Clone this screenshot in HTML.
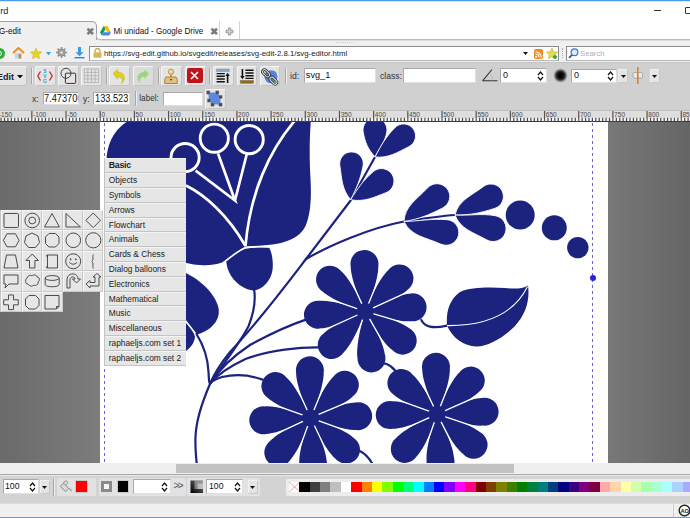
<!DOCTYPE html>
<html><head><meta charset="utf-8">
<style>
*{margin:0;padding:0;box-sizing:border-box}
html,body{width:690px;height:518px;overflow:hidden;background:#fff;font-family:"Liberation Sans",sans-serif;color:#222}
.a{position:absolute}
.t{position:absolute;white-space:nowrap;line-height:1}
.btn{position:absolute;top:66px;width:20.5px;height:20px;background:#e4e4e4;border-radius:2px;box-shadow:inset 1px 1px 0 #f4f4f4,inset -1px -1px 0 #c4c4c4}
.sep{position:absolute;top:68px;width:1px;height:16px;background:#a8a8a8;box-shadow:1px 0 0 #ececec}
.inp{position:absolute;background:#fff;border:1px solid #a9a9a9;border-right-color:#e0e0e0;border-bottom-color:#e0e0e0}
.cell{position:absolute;width:20.4px;height:20.5px;background:#e6e6e6;border:1px solid #c9c9c9;border-top-color:#f6f6f6;border-left-color:#f6f6f6}
.mi{position:absolute;left:104.9px;width:80.7px;height:14.8px;background:#e6e6e6;border-bottom:1px solid #c4c4c4;border-top:1px solid #f4f4f4;font-size:8.35px;padding-left:3.9px;line-height:12.8px;color:#222}
.sw{position:absolute;top:482px;height:10px;width:10.4px}
</style></head>
<body>
<!-- title bar -->
<div class="a" style="left:0;top:0;width:690px;height:1px;background:#4f98e2"></div><div class="a" style="left:0;top:1px;width:690px;height:1px;background:#d6e7f8"></div>
<div class="t" style="left:0.3px;top:7px;font-size:9.2px;color:#222">rd</div>
<div class="a" style="left:654px;top:10px;width:7px;height:1px;background:#333"></div>
<div class="a" style="left:684.5px;top:7px;width:9px;height:7px;border:1.4px solid #333;border-radius:1px"></div>

<!-- tab strip -->
<div class="a" style="left:-10px;top:21px;width:106.5px;height:20px;background:#f0f0f0;border:1px solid #a0a0a0;border-bottom:none;border-radius:0 5px 0 0"></div>
<div class="t" style="left:-1px;top:28px;font-size:8.15px;color:#111">G-edit</div>
<div class="t" style="left:85.5px;top:26.5px;font-size:10px;font-weight:bold;color:#7a7a7a">&#x2716;</div>

<svg class="a" style="left:100px;top:26px" width="11" height="10" viewBox="0 0 11 10"><path d="M3.7 0h3.6l3.7 6.3H7.4z" fill="#fbbc04"/><path d="M3.7 0L0 6.3l1.8 3.1 3.7-6.3z" fill="#0f9d58"/><path d="M1.8 9.4h7.4l1.8-3.1H3.6z" fill="#4285f4"/></svg>
<div class="t" style="left:113.5px;top:27.6px;font-size:8.15px;color:#111">Mi unidad - Google Drive</div>
<div class="t" style="left:209.5px;top:26.5px;font-size:10px;font-weight:bold;color:#7a7a7a">&#x2716;</div>
<div class="a" style="left:219.4px;top:21px;width:1px;height:18.5px;background:#d4d4d4"></div>
<div class="a" style="left:238.5px;top:21px;width:1px;height:18.5px;background:#d4d4d4"></div>
<svg class="a" style="left:225px;top:26.5px" width="9" height="9" viewBox="0 0 9 9"><path d="M3.3 1h2.4v2.3H8v2.4H5.7V8H3.3V5.7H1V3.3h2.3z" fill="#d0d0d0" stroke="#8a8a8a" stroke-width=".8"/></svg>

<!-- grip band -->
<div class="a" style="left:0;top:40px;width:690px;height:6px;background:#f0f0f0"></div><div class="a" style="left:100px;top:39px;width:590px;height:1px;background:#b8b8b8"></div><div class="a" style="left:100px;top:40px;width:590px;height:1px;background:#dcdcdc"></div><div class="a" style="left:96px;top:33px;width:6px;height:7px;border-left:1px solid #b8b8b8;border-bottom:1px solid #b8b8b8;border-radius:0 0 0 4px;background:transparent"></div><div class="a" style="left:336px;top:42px;width:18px;height:1px;border-top:1px dotted #cfcfcf"></div>
<div class="a" style="left:0;top:46px;width:690px;height:16px;background:#f0f0f0"></div>

<!-- nav icons -->
<div class="a" style="left:-6px;top:47.5px;width:11px;height:11px;border-radius:50%;background:#2eae3c"></div>
<div class="a" style="left:-3px;top:50.5px;width:5px;height:5px;border-radius:50%;border:1.3px solid #fff"></div>
<svg class="a" style="left:12px;top:47px" width="13" height="12" viewBox="0 0 13 12"><path d="M1 6L6.5 1 12 6" fill="none" stroke="#f28a1c" stroke-width="2"/><rect x="3" y="6" width="7" height="5.5" fill="#bcd8f0"/><rect x="6.5" y="7" width="2.5" height="4.5" fill="#c98a50"/></svg>
<svg class="a" style="left:30px;top:47.5px" width="12" height="11" viewBox="0 0 12 11"><path d="M6 0l1.7 3.7 4 .4-3 2.7.9 4L6 8.8 2.4 10.8l.9-4-3-2.7 4-.4z" fill="#e8d22c" stroke="#c8b020" stroke-width=".5"/></svg>
<svg class="a" style="left:45.5px;top:52px" width="5" height="3.5" viewBox="0 0 5 3.5"><path d="M0 0h5L2.5 3.5z" fill="#4a9be0"/></svg>
<svg class="a" style="left:56px;top:46.5px" width="11" height="11" viewBox="0 0 11 11"><g fill="#9a9a9a"><rect x="4.6" y="0" width="1.8" height="3" rx=".4" transform="rotate(0 5.5 5.5)"/><rect x="4.6" y="0" width="1.8" height="3" rx=".4" transform="rotate(45 5.5 5.5)"/><rect x="4.6" y="0" width="1.8" height="3" rx=".4" transform="rotate(90 5.5 5.5)"/><rect x="4.6" y="0" width="1.8" height="3" rx=".4" transform="rotate(135 5.5 5.5)"/><rect x="4.6" y="0" width="1.8" height="3" rx=".4" transform="rotate(180 5.5 5.5)"/><rect x="4.6" y="0" width="1.8" height="3" rx=".4" transform="rotate(225 5.5 5.5)"/><rect x="4.6" y="0" width="1.8" height="3" rx=".4" transform="rotate(270 5.5 5.5)"/><rect x="4.6" y="0" width="1.8" height="3" rx=".4" transform="rotate(315 5.5 5.5)"/></g><circle cx="5.5" cy="5.5" r="3.6" fill="#a8a8a8" stroke="#7a7a7a" stroke-width=".6"/><circle cx="5.5" cy="5.5" r="1.6" fill="#eee" stroke="#777" stroke-width=".5"/></svg>
<svg class="a" style="left:74px;top:47px" width="11" height="12" viewBox="0 0 11 12"><path d="M4 0h3v5.2h2.6L5.5 9.3 1.4 5.2H4z" fill="#3b9ae6"/><rect x="0.5" y="10" width="10" height="1.4" fill="#2a86d8"/></svg>

<!-- url bar -->
<div class="a" style="left:89.3px;top:46px;width:470px;height:14.5px;background:#fff;border:1px solid #8c8c8c;border-bottom-color:#b8b8b8"></div>
<svg class="a" style="left:92.5px;top:48px" width="9" height="10" viewBox="0 0 9 10"><path d="M2 4.5V3a2.5 2.5 0 0 1 5 0v1.5" fill="none" stroke="#c9a650" stroke-width="1.3"/><rect x="0.5" y="4.3" width="8" height="5.5" rx="0.8" fill="#d9b65a"/></svg>
<div class="t" style="left:104px;top:49.5px;font-size:7.8px;color:#1a1a1a">https://svg-edit.github.io/svgedit/releases/svg-edit-2.8.1/svg-editor.html</div>
<svg class="a" style="left:523px;top:52px" width="5" height="3" viewBox="0 0 5 3"><path d="M0 0h5L2.5 3z" fill="#111"/></svg>
<div class="a" style="left:533.5px;top:49px;width:9.5px;height:9.5px;border-radius:2px;background:#f08a24"></div>
<svg class="a" style="left:535px;top:50.5px" width="7" height="7" viewBox="0 0 7 7"><circle cx="1.2" cy="5.8" r="1" fill="#fff"/><path d="M0.5 3a3.5 3.5 0 0 1 3.5 3.5M0.5 0.8a5.7 5.7 0 0 1 5.7 5.7" fill="none" stroke="#fff" stroke-width="1.1"/></svg>
<svg class="a" style="left:546px;top:48px" width="12" height="11" viewBox="0 0 12 11"><path d="M6 0l1.7 3.7 4 .4-3 2.7.9 4L6 8.8 2.4 10.8l.9-4-3-2.7 4-.4z" fill="#e8d84a" stroke="#b8a830" stroke-width=".5"/><path d="M9 6.5l2.5 2.5L9 11.5 6.5 9z" fill="#2aa84a"/></svg>
<div class="a" style="left:562px;top:48px;width:1px;height:10px;border-left:1px dotted #aaa"></div>
<div class="a" style="left:566px;top:46px;width:130px;height:14.5px;background:#fff;border:1px solid #8c8c8c;border-bottom-color:#b8b8b8"></div>
<svg class="a" style="left:568px;top:48px" width="11" height="11" viewBox="0 0 11 11"><circle cx="6.5" cy="4.2" r="3.4" fill="#dde8fb" stroke="#3b74d8" stroke-width="1.2"/><path d="M4 6.8L1 9.8" stroke="#555" stroke-width="1.8"/></svg>
<div class="t" style="left:580px;top:49.5px;font-size:7.8px;color:#b0b0b0">Search</div>

<!-- toolbar area -->
<div class="a" style="left:0;top:62.3px;width:690px;height:48px;background:#d0d0d0;border-top:1px solid #c4c4c4"></div>

<!-- toolbar row1 -->
<div class="btn" style="left:-8px;width:34.5px"></div>
<div class="t" style="left:-3px;top:72.6px;font-size:9px;font-weight:bold;color:#222">Edit</div>
<svg class="a" style="left:17px;top:74.5px" width="6" height="3.5" viewBox="0 0 6 3.5"><path d="M0 0h6L3 3.5z" fill="#111"/></svg>
<div class="sep" style="left:31px"></div>
<div class="btn" style="left:35px"></div>
<svg class="a" style="left:35px;top:66px" width="20" height="20" viewBox="0 0 20 20"><path d="M5.5 5.5L2.8 10l2.7 4.5M14.5 5.5L17.2 10l-2.7 4.5" fill="none" stroke="#c8282a" stroke-width="1.3"/><text x="10" y="7.4" font-size="5" font-family="Liberation Sans" font-weight="bold" fill="#3aa0b4" text-anchor="middle">S</text><text x="10" y="12.2" font-size="5" font-family="Liberation Sans" font-weight="bold" fill="#3aa0b4" text-anchor="middle">V</text><text x="10" y="17" font-size="5" font-family="Liberation Sans" font-weight="bold" fill="#3aa0b4" text-anchor="middle">G</text></svg>
<div class="btn" style="left:58px"></div>
<svg class="a" style="left:58px;top:66px" width="20" height="20" viewBox="0 0 20 20"><circle cx="8" cy="7.3" r="5" fill="none" stroke="#333" stroke-width="0.9"/><rect x="7.4" y="7.2" width="10.3" height="10.2" rx="0.8" fill="none" stroke="#333" stroke-width="1"/></svg>
<div class="btn" style="left:81px"></div>
<svg class="a" style="left:81px;top:66px" width="20" height="20" viewBox="0 0 20 20"><g fill="none" stroke="#a8a8a8" stroke-width="0.7"><rect x="3.2" y="3" width="14.6" height="13.4"/><path d="M6.8 3v13.4M10.5 3v13.4M14.2 3v13.4M3.2 6.4h14.6M3.2 9.7h14.6M3.2 13h14.6"/></g></svg>
<div class="sep" style="left:106px"></div>
<div class="btn" style="left:109px"></div>
<svg class="a" style="left:109px;top:66px" width="20" height="20" viewBox="0 0 20 20"><path d="M4 7.5L8.5 3.5v2.5c4 0 7 2.3 7 6 0 2.5-1.5 4.3-3.3 5.5 1-1.5 1.3-3 .8-4.3-.6-1.7-2.5-2.5-4.5-2.5v2.5z" fill="#e0cf1c" stroke="#c4b210" stroke-width=".5"/></svg>
<div class="btn" style="left:133px;background:#dcdcdc"></div>
<svg class="a" style="left:133px;top:66px" width="20" height="20" viewBox="0 0 20 20"><path d="M16 7.5L11.5 3.5v2.5c-4 0-7 2.3-7 6 0 2.5 1.5 4.3 3.3 5.5-1-1.5-1.3-3-.8-4.3.6-1.7 2.5-2.5 4.5-2.5v2.5z" fill="#98d680"/></svg>
<div class="sep" style="left:157.5px"></div>
<div class="btn" style="left:161px"></div>
<svg class="a" style="left:161px;top:66px" width="20" height="20" viewBox="0 0 20 20"><circle cx="10" cy="5.8" r="2.6" fill="#f0dca0" stroke="#a87d28" stroke-width=".8"/><rect x="9" y="8" width="2" height="3.5" fill="#c8a050"/><path d="M5 11h10l1.3 2.5v4H3.7v-4z" fill="#e0c27a" stroke="#9c7420" stroke-width=".8"/><path d="M8.7 13.3h2.6L10 14.8z" fill="#222"/></svg>
<div class="btn" style="left:185px"></div>
<div class="a" style="left:187.4px;top:68.4px;width:15.2px;height:14.6px;background:#c0141a;border-radius:2px"></div>
<svg class="a" style="left:187.4px;top:68.4px" width="15" height="15" viewBox="0 0 15 15"><path d="M4 4l7 7M11 4l-7 7" stroke="#fff" stroke-width="1.6"/></svg>
<div class="sep" style="left:208.7px"></div>
<div class="btn" style="left:213px"></div>
<svg class="a" style="left:213px;top:66px" width="20" height="20" viewBox="0 0 20 20"><rect x="3.6" y="3" width="12.8" height="2.6" fill="#7fb0d0" stroke="#5a8aa8" stroke-width=".4"/><path d="M3.6 7.6h8.2M3.6 10.3h8.2M3.6 13h8.2M3.6 15.7h8.2" stroke="#111" stroke-width="1.4"/><path d="M14.6 17V9.5" stroke="#111" stroke-width="1.6"/><path d="M12.4 10L14.6 6.8 16.8 10z" fill="#111"/></svg>
<div class="btn" style="left:236.7px"></div>
<svg class="a" style="left:236.7px;top:66px" width="20" height="20" viewBox="0 0 20 20"><rect x="3.6" y="14.6" width="12.8" height="2.6" fill="#8c6a20" stroke="#604810" stroke-width=".4"/><path d="M8.4 4.3h8.2M8.4 7h8.2M8.4 9.7h8.2M8.4 12.4h8.2" stroke="#111" stroke-width="1.4"/><path d="M5.4 3V10.5" stroke="#111" stroke-width="1.6"/><path d="M3.2 10L5.4 13.2 7.6 10z" fill="#111"/></svg>
<div class="btn" style="left:259.8px"></div>
<svg class="a" style="left:259.8px;top:66px" width="20" height="20" viewBox="0 0 20 20"><circle cx="11" cy="10.8" r="6.5" fill="#5b7ff0"/><path d="M6.5 7.5c1.5 0 3 .8 3.2 2.3.2 1.6-1 2.4-2.6 2.7-.6-.8-.9-1.8-.9-2.8zM12 13.5c1.2-.8 3-.8 4.6.2-.5 1.2-1.3 2.1-2.4 2.7-1.2-.5-2-1.6-2.2-2.9zM13 4.8c1.5.3 2.8 1.2 3.6 2.4-1 .6-2.3.5-3.2-.3z" fill="#4aa848"/><g fill="none" stroke="#333" stroke-width="2.6"><rect x="1.8" y="5.2" width="8.5" height="4" rx="2" transform="rotate(45 6 7.2)"/><rect x="9.2" y="12.6" width="8.5" height="4" rx="2" transform="rotate(45 13.4 14.6)"/></g><g fill="none" stroke="#e8e8e8" stroke-width="1"><rect x="1.8" y="5.2" width="8.5" height="4" rx="2" transform="rotate(45 6 7.2)"/><rect x="9.2" y="12.6" width="8.5" height="4" rx="2" transform="rotate(45 13.4 14.6)"/></g></svg>
<div class="sep" style="left:285px"></div>
<div class="t" style="left:290px;top:71.5px;font-size:8.6px;color:#333">id:</div>
<div class="inp" style="left:303.6px;top:67.8px;width:72.5px;height:15.5px"></div>
<div class="t" style="left:305.8px;top:71px;font-size:9.2px;color:#111">svg_1</div>
<div class="t" style="left:380px;top:71.5px;font-size:8.6px;color:#333">class:</div>
<div class="inp" style="left:403.4px;top:67.8px;width:73px;height:15.5px"></div>
<svg class="a" style="left:481px;top:68px" width="18" height="14" viewBox="0 0 18 14"><path d="M1.5 12.8h15M1.5 12.8L11 1.5" fill="none" stroke="#333" stroke-width="1.1"/><path d="M8.5 5.5a8 8 0 0 1 3 7.3" fill="none" stroke="#aaa" stroke-width=".6"/></svg>
<div class="inp" style="left:500.2px;top:68px;width:46.5px;height:15px"></div>
<div class="t" style="left:503px;top:71px;font-size:9px;color:#111">0</div>
<svg class="a" style="left:536.5px;top:70.5px" width="7" height="10" viewBox="0 0 7 10"><path d="M1 4L3.5 1 6 4M1 6l2.5 3L6 6" fill="none" stroke="#111" stroke-width="1.2"/></svg>
<div class="a" style="left:552.5px;top:68px;width:15px;height:15px;border-radius:50%;background:radial-gradient(circle,#000 0%,#050505 22%,rgba(0,0,0,.75) 42%,rgba(0,0,0,.25) 58%,rgba(0,0,0,0) 70%)"></div>
<div class="inp" style="left:571.3px;top:68.6px;width:46px;height:14.2px"></div>
<div class="t" style="left:574px;top:71px;font-size:9px;color:#111">0</div>
<svg class="a" style="left:606.5px;top:70.5px" width="7" height="10" viewBox="0 0 7 10"><path d="M1 4L3.5 1 6 4M1 6l2.5 3L6 6" fill="none" stroke="#111" stroke-width="1.2"/></svg>
<div class="a" style="left:618px;top:68.6px;width:10.2px;height:14.2px;background:#e4e4e4;border:1px solid #c8c8c8;border-top-color:#f0f0f0;border-left-color:#f0f0f0"></div>
<svg class="a" style="left:620.5px;top:74.5px" width="5" height="3" viewBox="0 0 5 3"><path d="M0 0h5L2.5 3z" fill="#111"/></svg>
<svg class="a" style="left:632px;top:66px" width="12" height="19" viewBox="0 0 12 19"><rect x="1" y="6.5" width="9.5" height="5.5" rx="1" fill="#e8e8e8" stroke="#9a9a9a" stroke-width=".7"/><path d="M5.8 1v17" stroke="#e08020" stroke-width="1.6"/></svg>
<div class="a" style="left:649.5px;top:68.6px;width:10px;height:14.2px;background:#e4e4e4;border:1px solid #c8c8c8;border-top-color:#f0f0f0;border-left-color:#f0f0f0"></div>
<svg class="a" style="left:652px;top:74.5px" width="5" height="3" viewBox="0 0 5 3"><path d="M0 0h5L2.5 3z" fill="#111"/></svg>

<!-- toolbar row2 -->
<div class="t" style="left:32px;top:95px;font-size:8.6px;color:#333">x:</div>
<div class="inp" style="left:42.5px;top:91.8px;width:36.5px;height:13.5px"></div>
<div class="t" style="left:43.8px;top:92.7px;font-size:10.5px;color:#111;width:38.6px;overflow:hidden;transform:scaleX(0.88);transform-origin:0 0">7.473700</div>
<div class="t" style="left:83px;top:95px;font-size:8.6px;color:#333">y:</div>
<div class="inp" style="left:93px;top:91.8px;width:36.5px;height:13.5px"></div>
<div class="t" style="left:94.6px;top:92.7px;font-size:10.5px;color:#111;width:38.2px;overflow:hidden;transform:scaleX(0.88);transform-origin:0 0">133.5237</div>
<div class="a" style="left:134.5px;top:91px;width:1px;height:15px;background:#a8a8a8;box-shadow:1px 0 0 #ececec"></div>
<div class="t" style="left:139.3px;top:95px;font-size:8.2px;color:#333">label:</div>
<div class="inp" style="left:162.5px;top:91.5px;width:40px;height:14.8px"></div>
<div class="btn" style="left:205.3px;top:89px;width:20.3px"></div>
<svg class="a" style="left:205.3px;top:89px" width="20" height="20" viewBox="0 0 20 20"><path d="M3.3 3.5h9l3.2 4.4v7.7h-8L4 11.5z" fill="#5c88e4"/><rect x="1.7" y="1.9" width="3.2" height="3.2" fill="#4a4a4a" stroke="#888" stroke-width=".4"/><rect x="10.7" y="1.9" width="3.2" height="3.2" fill="#4a4a4a" stroke="#888" stroke-width=".4"/><rect x="13.9" y="6.3" width="3.2" height="3.2" fill="#4a4a4a" stroke="#888" stroke-width=".4"/><rect x="2.4" y="9.9" width="3.2" height="3.2" fill="#4a4a4a" stroke="#888" stroke-width=".4"/><rect x="5.9" y="14.0" width="3.2" height="3.2" fill="#4a4a4a" stroke="#888" stroke-width=".4"/><rect x="13.9" y="14.0" width="3.2" height="3.2" fill="#4a4a4a" stroke="#888" stroke-width=".4"/></svg>
<!--RULER-->
<div class="a" style="left:0;top:110px;width:690px;height:1px;background:#bebebe"></div>
<div class="a" style="left:0;top:111px;width:690px;height:7px;background:#dedede"></div>
<div class="a" style="left:0;top:118px;width:690px;height:3px;background:#f4f4f4"></div>
<div class="a" style="left:0;top:121px;width:690px;height:1px;background:#3a3a3a"></div>
<svg class="a" style="left:0;top:110px" width="690" height="13" viewBox="0 0 690 13"><rect x="-2.94" y="1" width="1.2" height="11" fill="#555"/><text x="-1.14" y="7.3" font-size="6.6" font-family="Liberation Sans" fill="#4a4a4a">-150</text><rect x="0.48" y="7.8" width="1.2" height="3.5" fill="#4a4a4a"/><rect x="3.90" y="7.8" width="1.2" height="3.5" fill="#4a4a4a"/><rect x="7.31" y="7.8" width="1.2" height="3.5" fill="#4a4a4a"/><rect x="10.73" y="7.8" width="1.2" height="3.5" fill="#4a4a4a"/><rect x="14.15" y="7.8" width="1.2" height="3.5" fill="#4a4a4a"/><rect x="17.57" y="7.8" width="1.2" height="3.5" fill="#4a4a4a"/><rect x="20.99" y="7.8" width="1.2" height="3.5" fill="#4a4a4a"/><rect x="24.40" y="7.8" width="1.2" height="3.5" fill="#4a4a4a"/><rect x="27.82" y="7.8" width="1.2" height="3.5" fill="#4a4a4a"/><rect x="31.24" y="1" width="1.2" height="11" fill="#555"/><text x="33.04" y="7.3" font-size="6.6" font-family="Liberation Sans" fill="#4a4a4a">-100</text><rect x="34.66" y="7.8" width="1.2" height="3.5" fill="#4a4a4a"/><rect x="38.08" y="7.8" width="1.2" height="3.5" fill="#4a4a4a"/><rect x="41.49" y="7.8" width="1.2" height="3.5" fill="#4a4a4a"/><rect x="44.91" y="7.8" width="1.2" height="3.5" fill="#4a4a4a"/><rect x="48.33" y="7.8" width="1.2" height="3.5" fill="#4a4a4a"/><rect x="51.75" y="7.8" width="1.2" height="3.5" fill="#4a4a4a"/><rect x="55.17" y="7.8" width="1.2" height="3.5" fill="#4a4a4a"/><rect x="58.58" y="7.8" width="1.2" height="3.5" fill="#4a4a4a"/><rect x="62.00" y="7.8" width="1.2" height="3.5" fill="#4a4a4a"/><rect x="65.42" y="1" width="1.2" height="11" fill="#555"/><text x="67.22" y="7.3" font-size="6.6" font-family="Liberation Sans" fill="#4a4a4a">-50</text><rect x="68.84" y="7.8" width="1.2" height="3.5" fill="#4a4a4a"/><rect x="72.26" y="7.8" width="1.2" height="3.5" fill="#4a4a4a"/><rect x="75.67" y="7.8" width="1.2" height="3.5" fill="#4a4a4a"/><rect x="79.09" y="7.8" width="1.2" height="3.5" fill="#4a4a4a"/><rect x="82.51" y="7.8" width="1.2" height="3.5" fill="#4a4a4a"/><rect x="85.93" y="7.8" width="1.2" height="3.5" fill="#4a4a4a"/><rect x="89.35" y="7.8" width="1.2" height="3.5" fill="#4a4a4a"/><rect x="92.76" y="7.8" width="1.2" height="3.5" fill="#4a4a4a"/><rect x="96.18" y="7.8" width="1.2" height="3.5" fill="#4a4a4a"/><rect x="99.60" y="1" width="1.2" height="11" fill="#555"/><text x="101.40" y="7.3" font-size="6.6" font-family="Liberation Sans" fill="#4a4a4a">0</text><rect x="103.02" y="7.8" width="1.2" height="3.5" fill="#4a4a4a"/><rect x="106.44" y="7.8" width="1.2" height="3.5" fill="#4a4a4a"/><rect x="109.85" y="7.8" width="1.2" height="3.5" fill="#4a4a4a"/><rect x="113.27" y="7.8" width="1.2" height="3.5" fill="#4a4a4a"/><rect x="116.69" y="7.8" width="1.2" height="3.5" fill="#4a4a4a"/><rect x="120.11" y="7.8" width="1.2" height="3.5" fill="#4a4a4a"/><rect x="123.53" y="7.8" width="1.2" height="3.5" fill="#4a4a4a"/><rect x="126.94" y="7.8" width="1.2" height="3.5" fill="#4a4a4a"/><rect x="130.36" y="7.8" width="1.2" height="3.5" fill="#4a4a4a"/><rect x="133.78" y="1" width="1.2" height="11" fill="#555"/><text x="135.58" y="7.3" font-size="6.6" font-family="Liberation Sans" fill="#4a4a4a">50</text><rect x="137.20" y="7.8" width="1.2" height="3.5" fill="#4a4a4a"/><rect x="140.62" y="7.8" width="1.2" height="3.5" fill="#4a4a4a"/><rect x="144.03" y="7.8" width="1.2" height="3.5" fill="#4a4a4a"/><rect x="147.45" y="7.8" width="1.2" height="3.5" fill="#4a4a4a"/><rect x="150.87" y="7.8" width="1.2" height="3.5" fill="#4a4a4a"/><rect x="154.29" y="7.8" width="1.2" height="3.5" fill="#4a4a4a"/><rect x="157.71" y="7.8" width="1.2" height="3.5" fill="#4a4a4a"/><rect x="161.12" y="7.8" width="1.2" height="3.5" fill="#4a4a4a"/><rect x="164.54" y="7.8" width="1.2" height="3.5" fill="#4a4a4a"/><rect x="167.96" y="1" width="1.2" height="11" fill="#555"/><text x="169.76" y="7.3" font-size="6.6" font-family="Liberation Sans" fill="#4a4a4a">100</text><rect x="171.38" y="7.8" width="1.2" height="3.5" fill="#4a4a4a"/><rect x="174.80" y="7.8" width="1.2" height="3.5" fill="#4a4a4a"/><rect x="178.21" y="7.8" width="1.2" height="3.5" fill="#4a4a4a"/><rect x="181.63" y="7.8" width="1.2" height="3.5" fill="#4a4a4a"/><rect x="185.05" y="7.8" width="1.2" height="3.5" fill="#4a4a4a"/><rect x="188.47" y="7.8" width="1.2" height="3.5" fill="#4a4a4a"/><rect x="191.89" y="7.8" width="1.2" height="3.5" fill="#4a4a4a"/><rect x="195.30" y="7.8" width="1.2" height="3.5" fill="#4a4a4a"/><rect x="198.72" y="7.8" width="1.2" height="3.5" fill="#4a4a4a"/><rect x="202.14" y="1" width="1.2" height="11" fill="#555"/><text x="203.94" y="7.3" font-size="6.6" font-family="Liberation Sans" fill="#4a4a4a">150</text><rect x="205.56" y="7.8" width="1.2" height="3.5" fill="#4a4a4a"/><rect x="208.98" y="7.8" width="1.2" height="3.5" fill="#4a4a4a"/><rect x="212.39" y="7.8" width="1.2" height="3.5" fill="#4a4a4a"/><rect x="215.81" y="7.8" width="1.2" height="3.5" fill="#4a4a4a"/><rect x="219.23" y="7.8" width="1.2" height="3.5" fill="#4a4a4a"/><rect x="222.65" y="7.8" width="1.2" height="3.5" fill="#4a4a4a"/><rect x="226.07" y="7.8" width="1.2" height="3.5" fill="#4a4a4a"/><rect x="229.48" y="7.8" width="1.2" height="3.5" fill="#4a4a4a"/><rect x="232.90" y="7.8" width="1.2" height="3.5" fill="#4a4a4a"/><rect x="236.32" y="1" width="1.2" height="11" fill="#555"/><text x="238.12" y="7.3" font-size="6.6" font-family="Liberation Sans" fill="#4a4a4a">200</text><rect x="239.74" y="7.8" width="1.2" height="3.5" fill="#4a4a4a"/><rect x="243.16" y="7.8" width="1.2" height="3.5" fill="#4a4a4a"/><rect x="246.57" y="7.8" width="1.2" height="3.5" fill="#4a4a4a"/><rect x="249.99" y="7.8" width="1.2" height="3.5" fill="#4a4a4a"/><rect x="253.41" y="7.8" width="1.2" height="3.5" fill="#4a4a4a"/><rect x="256.83" y="7.8" width="1.2" height="3.5" fill="#4a4a4a"/><rect x="260.25" y="7.8" width="1.2" height="3.5" fill="#4a4a4a"/><rect x="263.66" y="7.8" width="1.2" height="3.5" fill="#4a4a4a"/><rect x="267.08" y="7.8" width="1.2" height="3.5" fill="#4a4a4a"/><rect x="270.50" y="1" width="1.2" height="11" fill="#555"/><text x="272.30" y="7.3" font-size="6.6" font-family="Liberation Sans" fill="#4a4a4a">250</text><rect x="273.92" y="7.8" width="1.2" height="3.5" fill="#4a4a4a"/><rect x="277.34" y="7.8" width="1.2" height="3.5" fill="#4a4a4a"/><rect x="280.75" y="7.8" width="1.2" height="3.5" fill="#4a4a4a"/><rect x="284.17" y="7.8" width="1.2" height="3.5" fill="#4a4a4a"/><rect x="287.59" y="7.8" width="1.2" height="3.5" fill="#4a4a4a"/><rect x="291.01" y="7.8" width="1.2" height="3.5" fill="#4a4a4a"/><rect x="294.43" y="7.8" width="1.2" height="3.5" fill="#4a4a4a"/><rect x="297.84" y="7.8" width="1.2" height="3.5" fill="#4a4a4a"/><rect x="301.26" y="7.8" width="1.2" height="3.5" fill="#4a4a4a"/><rect x="304.68" y="1" width="1.2" height="11" fill="#555"/><text x="306.48" y="7.3" font-size="6.6" font-family="Liberation Sans" fill="#4a4a4a">300</text><rect x="308.10" y="7.8" width="1.2" height="3.5" fill="#4a4a4a"/><rect x="311.52" y="7.8" width="1.2" height="3.5" fill="#4a4a4a"/><rect x="314.93" y="7.8" width="1.2" height="3.5" fill="#4a4a4a"/><rect x="318.35" y="7.8" width="1.2" height="3.5" fill="#4a4a4a"/><rect x="321.77" y="7.8" width="1.2" height="3.5" fill="#4a4a4a"/><rect x="325.19" y="7.8" width="1.2" height="3.5" fill="#4a4a4a"/><rect x="328.61" y="7.8" width="1.2" height="3.5" fill="#4a4a4a"/><rect x="332.02" y="7.8" width="1.2" height="3.5" fill="#4a4a4a"/><rect x="335.44" y="7.8" width="1.2" height="3.5" fill="#4a4a4a"/><rect x="338.86" y="1" width="1.2" height="11" fill="#555"/><text x="340.66" y="7.3" font-size="6.6" font-family="Liberation Sans" fill="#4a4a4a">350</text><rect x="342.28" y="7.8" width="1.2" height="3.5" fill="#4a4a4a"/><rect x="345.70" y="7.8" width="1.2" height="3.5" fill="#4a4a4a"/><rect x="349.11" y="7.8" width="1.2" height="3.5" fill="#4a4a4a"/><rect x="352.53" y="7.8" width="1.2" height="3.5" fill="#4a4a4a"/><rect x="355.95" y="7.8" width="1.2" height="3.5" fill="#4a4a4a"/><rect x="359.37" y="7.8" width="1.2" height="3.5" fill="#4a4a4a"/><rect x="362.79" y="7.8" width="1.2" height="3.5" fill="#4a4a4a"/><rect x="366.20" y="7.8" width="1.2" height="3.5" fill="#4a4a4a"/><rect x="369.62" y="7.8" width="1.2" height="3.5" fill="#4a4a4a"/><rect x="373.04" y="1" width="1.2" height="11" fill="#555"/><text x="374.84" y="7.3" font-size="6.6" font-family="Liberation Sans" fill="#4a4a4a">400</text><rect x="376.46" y="7.8" width="1.2" height="3.5" fill="#4a4a4a"/><rect x="379.88" y="7.8" width="1.2" height="3.5" fill="#4a4a4a"/><rect x="383.29" y="7.8" width="1.2" height="3.5" fill="#4a4a4a"/><rect x="386.71" y="7.8" width="1.2" height="3.5" fill="#4a4a4a"/><rect x="390.13" y="7.8" width="1.2" height="3.5" fill="#4a4a4a"/><rect x="393.55" y="7.8" width="1.2" height="3.5" fill="#4a4a4a"/><rect x="396.97" y="7.8" width="1.2" height="3.5" fill="#4a4a4a"/><rect x="400.38" y="7.8" width="1.2" height="3.5" fill="#4a4a4a"/><rect x="403.80" y="7.8" width="1.2" height="3.5" fill="#4a4a4a"/><rect x="407.22" y="1" width="1.2" height="11" fill="#555"/><text x="409.02" y="7.3" font-size="6.6" font-family="Liberation Sans" fill="#4a4a4a">450</text><rect x="410.64" y="7.8" width="1.2" height="3.5" fill="#4a4a4a"/><rect x="414.06" y="7.8" width="1.2" height="3.5" fill="#4a4a4a"/><rect x="417.47" y="7.8" width="1.2" height="3.5" fill="#4a4a4a"/><rect x="420.89" y="7.8" width="1.2" height="3.5" fill="#4a4a4a"/><rect x="424.31" y="7.8" width="1.2" height="3.5" fill="#4a4a4a"/><rect x="427.73" y="7.8" width="1.2" height="3.5" fill="#4a4a4a"/><rect x="431.15" y="7.8" width="1.2" height="3.5" fill="#4a4a4a"/><rect x="434.56" y="7.8" width="1.2" height="3.5" fill="#4a4a4a"/><rect x="437.98" y="7.8" width="1.2" height="3.5" fill="#4a4a4a"/><rect x="441.40" y="1" width="1.2" height="11" fill="#555"/><text x="443.20" y="7.3" font-size="6.6" font-family="Liberation Sans" fill="#4a4a4a">500</text><rect x="444.82" y="7.8" width="1.2" height="3.5" fill="#4a4a4a"/><rect x="448.24" y="7.8" width="1.2" height="3.5" fill="#4a4a4a"/><rect x="451.65" y="7.8" width="1.2" height="3.5" fill="#4a4a4a"/><rect x="455.07" y="7.8" width="1.2" height="3.5" fill="#4a4a4a"/><rect x="458.49" y="7.8" width="1.2" height="3.5" fill="#4a4a4a"/><rect x="461.91" y="7.8" width="1.2" height="3.5" fill="#4a4a4a"/><rect x="465.33" y="7.8" width="1.2" height="3.5" fill="#4a4a4a"/><rect x="468.74" y="7.8" width="1.2" height="3.5" fill="#4a4a4a"/><rect x="472.16" y="7.8" width="1.2" height="3.5" fill="#4a4a4a"/><rect x="475.58" y="1" width="1.2" height="11" fill="#555"/><text x="477.38" y="7.3" font-size="6.6" font-family="Liberation Sans" fill="#4a4a4a">550</text><rect x="479.00" y="7.8" width="1.2" height="3.5" fill="#4a4a4a"/><rect x="482.42" y="7.8" width="1.2" height="3.5" fill="#4a4a4a"/><rect x="485.83" y="7.8" width="1.2" height="3.5" fill="#4a4a4a"/><rect x="489.25" y="7.8" width="1.2" height="3.5" fill="#4a4a4a"/><rect x="492.67" y="7.8" width="1.2" height="3.5" fill="#4a4a4a"/><rect x="496.09" y="7.8" width="1.2" height="3.5" fill="#4a4a4a"/><rect x="499.51" y="7.8" width="1.2" height="3.5" fill="#4a4a4a"/><rect x="502.92" y="7.8" width="1.2" height="3.5" fill="#4a4a4a"/><rect x="506.34" y="7.8" width="1.2" height="3.5" fill="#4a4a4a"/><rect x="509.76" y="1" width="1.2" height="11" fill="#555"/><text x="511.56" y="7.3" font-size="6.6" font-family="Liberation Sans" fill="#4a4a4a">600</text><rect x="513.18" y="7.8" width="1.2" height="3.5" fill="#4a4a4a"/><rect x="516.60" y="7.8" width="1.2" height="3.5" fill="#4a4a4a"/><rect x="520.01" y="7.8" width="1.2" height="3.5" fill="#4a4a4a"/><rect x="523.43" y="7.8" width="1.2" height="3.5" fill="#4a4a4a"/><rect x="526.85" y="7.8" width="1.2" height="3.5" fill="#4a4a4a"/><rect x="530.27" y="7.8" width="1.2" height="3.5" fill="#4a4a4a"/><rect x="533.69" y="7.8" width="1.2" height="3.5" fill="#4a4a4a"/><rect x="537.10" y="7.8" width="1.2" height="3.5" fill="#4a4a4a"/><rect x="540.52" y="7.8" width="1.2" height="3.5" fill="#4a4a4a"/><rect x="543.94" y="1" width="1.2" height="11" fill="#555"/><text x="545.74" y="7.3" font-size="6.6" font-family="Liberation Sans" fill="#4a4a4a">650</text><rect x="547.36" y="7.8" width="1.2" height="3.5" fill="#4a4a4a"/><rect x="550.78" y="7.8" width="1.2" height="3.5" fill="#4a4a4a"/><rect x="554.19" y="7.8" width="1.2" height="3.5" fill="#4a4a4a"/><rect x="557.61" y="7.8" width="1.2" height="3.5" fill="#4a4a4a"/><rect x="561.03" y="7.8" width="1.2" height="3.5" fill="#4a4a4a"/><rect x="564.45" y="7.8" width="1.2" height="3.5" fill="#4a4a4a"/><rect x="567.87" y="7.8" width="1.2" height="3.5" fill="#4a4a4a"/><rect x="571.28" y="7.8" width="1.2" height="3.5" fill="#4a4a4a"/><rect x="574.70" y="7.8" width="1.2" height="3.5" fill="#4a4a4a"/><rect x="578.12" y="1" width="1.2" height="11" fill="#555"/><text x="579.92" y="7.3" font-size="6.6" font-family="Liberation Sans" fill="#4a4a4a">700</text><rect x="581.54" y="7.8" width="1.2" height="3.5" fill="#4a4a4a"/><rect x="584.96" y="7.8" width="1.2" height="3.5" fill="#4a4a4a"/><rect x="588.37" y="7.8" width="1.2" height="3.5" fill="#4a4a4a"/><rect x="591.79" y="7.8" width="1.2" height="3.5" fill="#4a4a4a"/><rect x="595.21" y="7.8" width="1.2" height="3.5" fill="#4a4a4a"/><rect x="598.63" y="7.8" width="1.2" height="3.5" fill="#4a4a4a"/><rect x="602.05" y="7.8" width="1.2" height="3.5" fill="#4a4a4a"/><rect x="605.46" y="7.8" width="1.2" height="3.5" fill="#4a4a4a"/><rect x="608.88" y="7.8" width="1.2" height="3.5" fill="#4a4a4a"/><rect x="612.30" y="1" width="1.2" height="11" fill="#555"/><text x="614.10" y="7.3" font-size="6.6" font-family="Liberation Sans" fill="#4a4a4a">750</text><rect x="615.72" y="7.8" width="1.2" height="3.5" fill="#4a4a4a"/><rect x="619.14" y="7.8" width="1.2" height="3.5" fill="#4a4a4a"/><rect x="622.55" y="7.8" width="1.2" height="3.5" fill="#4a4a4a"/><rect x="625.97" y="7.8" width="1.2" height="3.5" fill="#4a4a4a"/><rect x="629.39" y="7.8" width="1.2" height="3.5" fill="#4a4a4a"/><rect x="632.81" y="7.8" width="1.2" height="3.5" fill="#4a4a4a"/><rect x="636.23" y="7.8" width="1.2" height="3.5" fill="#4a4a4a"/><rect x="639.64" y="7.8" width="1.2" height="3.5" fill="#4a4a4a"/><rect x="643.06" y="7.8" width="1.2" height="3.5" fill="#4a4a4a"/><rect x="646.48" y="1" width="1.2" height="11" fill="#555"/><text x="648.28" y="7.3" font-size="6.6" font-family="Liberation Sans" fill="#4a4a4a">800</text><rect x="649.90" y="7.8" width="1.2" height="3.5" fill="#4a4a4a"/><rect x="653.32" y="7.8" width="1.2" height="3.5" fill="#4a4a4a"/><rect x="656.73" y="7.8" width="1.2" height="3.5" fill="#4a4a4a"/><rect x="660.15" y="7.8" width="1.2" height="3.5" fill="#4a4a4a"/><rect x="663.57" y="7.8" width="1.2" height="3.5" fill="#4a4a4a"/><rect x="666.99" y="7.8" width="1.2" height="3.5" fill="#4a4a4a"/><rect x="670.41" y="7.8" width="1.2" height="3.5" fill="#4a4a4a"/><rect x="673.82" y="7.8" width="1.2" height="3.5" fill="#4a4a4a"/><rect x="677.24" y="7.8" width="1.2" height="3.5" fill="#4a4a4a"/><rect x="680.66" y="1" width="1.2" height="11" fill="#555"/><text x="682.46" y="7.3" font-size="6.6" font-family="Liberation Sans" fill="#4a4a4a">850</text><rect x="684.08" y="7.8" width="1.2" height="3.5" fill="#4a4a4a"/><rect x="687.50" y="7.8" width="1.2" height="3.5" fill="#4a4a4a"/><rect x="690.91" y="7.8" width="1.2" height="3.5" fill="#4a4a4a"/><rect x="694.33" y="7.8" width="1.2" height="3.5" fill="#4a4a4a"/></svg><!--/RULER-->
<div class="a" style="left:0;top:122px;width:690px;height:341px;background:linear-gradient(to right,#6a6a6a 0px,#7c7c7c 100px,#7d7d7d 345px,#787878 608px,#656565 690px)"></div>
<div class="a" style="left:100px;top:122px;width:508px;height:341px;background:#fff"></div>
<!--ART--><svg class="a" style="left:0;top:0" width="690" height="518" viewBox="0 0 690 518"><defs><clipPath id="pg"><rect x="100" y="122" width="508" height="341"/></clipPath></defs><g clip-path="url(#pg)"><path d="M128,118 L311,118 C310,132 309,150 310.3,175 C311.5,195 311,210 307,222 C304,234 292,241 276,244 C265,245.5 255,246 245.5,246.5 C238,251 230,258 222,262.5 C215,265 208,265.5 200,265 C194,264.6 190,263.8 186,263 L150,262 L106,200 L106.5,160 C107,145 113,130 128,121 Z" fill="#1b237e" />
<path d="M225.5,262 C232,256 240,250 246,248.5 C254,247 262,247 269,247.5 C272,252 273.5,262 272.5,270 C271,281 262,290 253.5,290.5 C245,290 234,283 229,272 C227,268 226,262 226,258 Z" fill="#1b237e" />
<path d="M186,273 C200,280 215,293 218.5,308 C221,322 208,332 196.5,334.5 L186,321 Z" fill="#1b237e" />
<path d="M186,323 C190,327 194,332 195,337 C194,344 190,348 186,351 Z" fill="#1b237e" />
<path d="M186,185.5 C205,195 228,215 245.5,246" fill="none" stroke="#fff" stroke-width="2.7"/>
<path d="M294.5,121 C270,150 250,192 245.5,246" fill="none" stroke="#fff" stroke-width="2.7"/>
<path d="M195.6,170.6 L235,200.5 L218,153.5 M235,200.5 L246.8,154" fill="none" stroke="#fff" stroke-width="2.7"/>
<circle cx="185.1" cy="157.6" r="14.1" fill="#1b237e" stroke="#fff" stroke-width="2.9"/>
<circle cx="214.3" cy="138.2" r="14.1" fill="#1b237e" stroke="#fff" stroke-width="2.9"/>
<circle cx="249.2" cy="139.6" r="14.1" fill="#1b237e" stroke="#fff" stroke-width="2.9"/>
<path d="M223,263 C231,256.5 239,250.5 245.8,247.6 C254,246.6 262,246.6 270,247" fill="none" stroke="#fff" stroke-width="1.6"/>
<path d="M185,320 L197,335.5" fill="none" stroke="#fff" stroke-width="1.4"/>
<path d="M196.5,334 C204,346 208,360 208.5,372 C209,380 209,384 210.4,383" fill="none" stroke="#1b237e" stroke-width="2.2" stroke-linecap="round"/>
<path d="M210.4,383 C203,400 196,420 195.5,437 C195,447 196,455 196.8,465" fill="none" stroke="#1b237e" stroke-width="2.2" stroke-linecap="round"/>
<path d="M254,289 C256,300 254,312 248.6,326 C242,340 226,360 210.4,383" fill="none" stroke="#1b237e" stroke-width="2.2" stroke-linecap="round"/>
<path d="M351,200 L306,259 C290,280 260,320 230,352 C222,362 215,372 210.4,383" fill="none" stroke="#1b237e" stroke-width="2.2" stroke-linecap="round"/>
<path d="M306,259 C330,245 370,228 404,221.5" fill="none" stroke="#1b237e" stroke-width="2.2" stroke-linecap="round"/>
<path d="M404,221.5 C420,219 440,216 455,215" fill="none" stroke="#1b237e" stroke-width="2.2" stroke-linecap="round"/>
<path d="M351,200 L375,157" fill="none" stroke="#1b237e" stroke-width="2.2" stroke-linecap="round"/>
<path d="M306.6,319.4 C290,325 270,334 250,345 C235,355 220,368 210.4,383" fill="none" stroke="#1b237e" stroke-width="2.2" stroke-linecap="round"/>
<path d="M322,347.5 C300,347 270,350 246,358.8 C235,364 220,372 210.4,383" fill="none" stroke="#1b237e" stroke-width="2.2" stroke-linecap="round"/>
<path d="M262.5,379.6 C250,375 235,374 222,377 C216,379 212,381 210.4,383" fill="none" stroke="#1b237e" stroke-width="2.2" stroke-linecap="round"/>
<path d="M421.3,319.9 C425,327 432,329 447,325.6" fill="none" stroke="#1b237e" stroke-width="2.2" stroke-linecap="round"/>
<path d="M378.5,365 C383,361.5 390,364 395.5,371" fill="none" stroke="#1b237e" stroke-width="2.2" stroke-linecap="round"/>
<path d="M359,450.5 C364,453 369,457 373,465" fill="none" stroke="#1b237e" stroke-width="2.2" stroke-linecap="round"/>
<path d="M350.6,199.7 C356.9,187.5 360.4,179.3 363.1,165.8 A11.8,11.8 0 1 0 339.8,165.3 C341.9,178.8 341.7,189.3 350.6,199.7Z" fill="#1b237e" stroke="#fff" stroke-width="0.9"/>
<path d="M350.6,199.7 C364.1,202.3 373.2,197.6 386.0,192.7 A12.5,12.5 0 1 0 373.3,171.6 C362.9,180.6 358.0,188.2 350.6,199.7Z" fill="#1b237e" stroke="#fff" stroke-width="0.9"/>
<path d="M375.0,157.0 C379.6,147.6 385.0,142.4 386.8,132.1 A12,12 0 1 0 363.2,132.1 C365.0,142.4 368.0,149.2 375.0,157.0Z" fill="#1b237e" stroke="#fff" stroke-width="0.9"/>
<path d="M375.0,157.0 C388.4,158.3 396.8,152.7 408.8,146.7 A12,12 0 1 0 394.8,127.7 C385.5,137.4 381.2,145.1 375.0,157.0Z" fill="#1b237e" stroke="#fff" stroke-width="0.9"/>
<path d="M404.0,221.5 C419.4,219.0 428.9,215.0 442.8,207.9 A12.8,12.8 0 1 0 427.6,187.8 C417.0,199.3 404.8,205.9 404.0,221.5Z" fill="#1b237e" stroke="#fff" stroke-width="0.9"/>
<path d="M404.0,221.5 C411.0,236.3 425.8,237.3 440.7,244.1 A12.8,12.8 0 1 0 447.0,219.7 C430.7,218.4 420.4,221.1 404.0,221.5Z" fill="#1b237e" stroke="#fff" stroke-width="0.9"/>
<path d="M455.0,215.0 C470.3,215.2 480.1,213.0 494.7,208.4 A12.5,12.5 0 1 0 483.4,186.5 C471.3,195.8 458.4,200.1 455.0,215.0Z" fill="#1b237e" stroke="#fff" stroke-width="0.9"/>
<path d="M455.0,215.0 C460.3,229.3 473.3,232.3 486.6,239.8 A13,13 0 1 0 495.2,215.7 C480.1,213.1 470.2,215.9 455.0,215.0Z" fill="#1b237e" stroke="#fff" stroke-width="0.9"/>
<circle cx="520.2" cy="215" r="14.5" fill="#1b237e"/>
<circle cx="554.3" cy="227.8" r="12.5" fill="#1b237e"/>
<circle cx="577.8" cy="247.6" r="10.7" fill="#1b237e"/>
<path d="M447,325.6 C446,312 449,300 460,292 C470,287 490,287 505,288 C515,289 522,289 528,285.5 C530,300 526,314 515,326 C503,338 488,346 477,346.5 C465,347 452,338 447,325.6 Z" fill="#1b237e" />
<path d="M447,325.6 C490,326 515,312 527.5,286.5" fill="none" stroke="#fff" stroke-width="1.1"/>
<g transform="translate(365.3,311.4)"><path transform="rotate(-91)" d="M0,0 C12,6 34.07,13.99 45.07,13.79 A14,14 0 1 0 45.07,-13.79 C34.07,-13.99 12,-6 0,0Z" fill="#1b237e"/><path transform="rotate(-44)" d="M0,0 C12,6 34.07,13.99 45.07,13.79 A14,14 0 1 0 45.07,-13.79 C34.07,-13.99 12,-6 0,0Z" fill="#1b237e"/><path transform="rotate(-5)" d="M0,0 C12,6 34.07,13.99 45.07,13.79 A14,14 0 1 0 45.07,-13.79 C34.07,-13.99 12,-6 0,0Z" fill="#1b237e"/><path transform="rotate(38)" d="M0,0 C12,6 34.07,13.99 45.07,13.79 A14,14 0 1 0 45.07,-13.79 C34.07,-13.99 12,-6 0,0Z" fill="#1b237e"/><path transform="rotate(82.5)" d="M0,0 C12,6 34.07,13.99 45.07,13.79 A14,14 0 1 0 45.07,-13.79 C34.07,-13.99 12,-6 0,0Z" fill="#1b237e"/><path transform="rotate(135)" d="M0,0 C12,6 34.07,13.99 45.07,13.79 A14,14 0 1 0 45.07,-13.79 C34.07,-13.99 12,-6 0,0Z" fill="#1b237e"/><path transform="rotate(176)" d="M0,0 C12,6 34.07,13.99 45.07,13.79 A14,14 0 1 0 45.07,-13.79 C34.07,-13.99 12,-6 0,0Z" fill="#1b237e"/><path transform="rotate(-138)" d="M0,0 C12,6 34.07,13.99 45.07,13.79 A14,14 0 1 0 45.07,-13.79 C34.07,-13.99 12,-6 0,0Z" fill="#1b237e"/><path d="M-3.32,-7.28 L-18.25,-40.04" stroke="#fff" stroke-width="1.3"/><path d="M3.06,-7.39 L16.84,-40.65" stroke="#fff" stroke-width="1.3"/><path d="M7.28,-3.32 L40.04,-18.25" stroke="#fff" stroke-width="1.3"/><path d="M7.67,2.27 L42.19,12.50" stroke="#fff" stroke-width="1.3"/><path d="M3.97,6.95 L21.83,38.20" stroke="#fff" stroke-width="1.3"/><path d="M-2.57,7.58 L-14.14,41.66" stroke="#fff" stroke-width="1.3"/><path d="M-7.28,3.32 L-40.04,18.25" stroke="#fff" stroke-width="1.3"/><path d="M-7.56,-2.60 L-41.60,-14.32" stroke="#fff" stroke-width="1.3"/><circle r="8.6" fill="#1b237e"/></g>
<g transform="translate(310.7,417.8)"><path transform="rotate(-91)" d="M0,0 C12,6 34.07,13.99 45.07,13.79 A14,14 0 1 0 45.07,-13.79 C34.07,-13.99 12,-6 0,0Z" fill="#1b237e"/><path transform="rotate(-44)" d="M0,0 C12,6 34.07,13.99 45.07,13.79 A14,14 0 1 0 45.07,-13.79 C34.07,-13.99 12,-6 0,0Z" fill="#1b237e"/><path transform="rotate(-2)" d="M0,0 C12,6 34.07,13.99 45.07,13.79 A14,14 0 1 0 45.07,-13.79 C34.07,-13.99 12,-6 0,0Z" fill="#1b237e"/><path transform="rotate(42)" d="M0,0 C12,6 34.07,13.99 45.07,13.79 A14,14 0 1 0 45.07,-13.79 C34.07,-13.99 12,-6 0,0Z" fill="#1b237e"/><path transform="rotate(87)" d="M0,0 C12,6 34.07,13.99 45.07,13.79 A14,14 0 1 0 45.07,-13.79 C34.07,-13.99 12,-6 0,0Z" fill="#1b237e"/><path transform="rotate(133)" d="M0,0 C12,6 34.07,13.99 45.07,13.79 A14,14 0 1 0 45.07,-13.79 C34.07,-13.99 12,-6 0,0Z" fill="#1b237e"/><path transform="rotate(177)" d="M0,0 C12,6 34.07,13.99 45.07,13.79 A14,14 0 1 0 45.07,-13.79 C34.07,-13.99 12,-6 0,0Z" fill="#1b237e"/><path transform="rotate(-138)" d="M0,0 C12,6 34.07,13.99 45.07,13.79 A14,14 0 1 0 45.07,-13.79 C34.07,-13.99 12,-6 0,0Z" fill="#1b237e"/><path d="M-3.32,-7.28 L-18.25,-40.04" stroke="#fff" stroke-width="1.3"/><path d="M3.06,-7.39 L16.84,-40.65" stroke="#fff" stroke-width="1.3"/><path d="M7.36,-3.13 L40.50,-17.19" stroke="#fff" stroke-width="1.3"/><path d="M7.52,2.74 L41.35,15.05" stroke="#fff" stroke-width="1.3"/><path d="M3.44,7.22 L18.94,39.71" stroke="#fff" stroke-width="1.3"/><path d="M-2.74,7.52 L-15.05,41.35" stroke="#fff" stroke-width="1.3"/><path d="M-7.25,3.38 L-39.88,18.60" stroke="#fff" stroke-width="1.3"/><path d="M-7.54,-2.67 L-41.48,-14.69" stroke="#fff" stroke-width="1.3"/><circle r="8.6" fill="#1b237e"/></g>
<g transform="translate(437.2,414.2)"><path transform="rotate(-91.5)" d="M0,0 C12,6 34.07,13.99 45.07,13.79 A14,14 0 1 0 45.07,-13.79 C34.07,-13.99 12,-6 0,0Z" fill="#1b237e"/><path transform="rotate(-45)" d="M0,0 C12,6 34.07,13.99 45.07,13.79 A14,14 0 1 0 45.07,-13.79 C34.07,-13.99 12,-6 0,0Z" fill="#1b237e"/><path transform="rotate(-3)" d="M0,0 C12,6 34.07,13.99 45.07,13.79 A14,14 0 1 0 45.07,-13.79 C34.07,-13.99 12,-6 0,0Z" fill="#1b237e"/><path transform="rotate(40)" d="M0,0 C12,6 34.07,13.99 45.07,13.79 A14,14 0 1 0 45.07,-13.79 C34.07,-13.99 12,-6 0,0Z" fill="#1b237e"/><path transform="rotate(86)" d="M0,0 C12,6 34.07,13.99 45.07,13.79 A14,14 0 1 0 45.07,-13.79 C34.07,-13.99 12,-6 0,0Z" fill="#1b237e"/><path transform="rotate(133)" d="M0,0 C12,6 34.07,13.99 45.07,13.79 A14,14 0 1 0 45.07,-13.79 C34.07,-13.99 12,-6 0,0Z" fill="#1b237e"/><path transform="rotate(179)" d="M0,0 C12,6 34.07,13.99 45.07,13.79 A14,14 0 1 0 45.07,-13.79 C34.07,-13.99 12,-6 0,0Z" fill="#1b237e"/><path transform="rotate(-139)" d="M0,0 C12,6 34.07,13.99 45.07,13.79 A14,14 0 1 0 45.07,-13.79 C34.07,-13.99 12,-6 0,0Z" fill="#1b237e"/><path d="M-3.41,-7.24 L-18.77,-39.80" stroke="#fff" stroke-width="1.3"/><path d="M2.96,-7.43 L16.30,-40.87" stroke="#fff" stroke-width="1.3"/><path d="M7.31,-3.25 L40.20,-17.90" stroke="#fff" stroke-width="1.3"/><path d="M7.59,2.54 L41.73,13.96" stroke="#fff" stroke-width="1.3"/><path d="M3.63,7.13 L19.98,39.20" stroke="#fff" stroke-width="1.3"/><path d="M-2.67,7.54 L-14.69,41.48" stroke="#fff" stroke-width="1.3"/><path d="M-7.31,3.25 L-40.20,17.90" stroke="#fff" stroke-width="1.3"/><path d="M-7.52,-2.74 L-41.35,-15.05" stroke="#fff" stroke-width="1.3"/><circle r="8.6" fill="#1b237e"/></g></g></svg><!--/ART-->
<div class="a" style="left:103.6px;top:122px;width:1px;height:341px;background:repeating-linear-gradient(transparent 0 0.6px,#6464e6 0.6px 3.8px,transparent 3.8px 6px)"></div>
<div class="a" style="left:592.4px;top:122px;width:1px;height:341px;background:repeating-linear-gradient(transparent 0 0.6px,#6464e6 0.6px 3.8px,transparent 3.8px 6px)"></div>
<div class="a" style="left:589.7px;top:275px;width:6px;height:6px;border-radius:50%;background:#2626d8"></div>
<div class="a" style="left:0;top:209.5px;width:103.4px;height:82px;background:#c4c4c4"></div>
<div class="a" style="left:0;top:291.5px;width:63px;height:20.5px;background:#c4c4c4"></div>
<div class="cell" style="left:1.4px;top:209.5px"></div>
<svg class="a" style="left:1.4px;top:209.5px" width="20.3" height="20.3" viewBox="0 0 20.3 20.3"><g fill="none" stroke="#4a4a4a" stroke-width="1"><rect x="3" y="3.5" width="14.5" height="14" rx="1" /></g></svg>
<div class="cell" style="left:21.8px;top:209.5px"></div>
<svg class="a" style="left:21.8px;top:209.5px" width="20.3" height="20.3" viewBox="0 0 20.3 20.3"><g fill="none" stroke="#4a4a4a" stroke-width="1"><circle cx="10.2" cy="10.5" r="7.3"/><circle cx="10.2" cy="10.5" r="3.4"/></g></svg>
<div class="cell" style="left:42.2px;top:209.5px"></div>
<svg class="a" style="left:42.2px;top:209.5px" width="20.3" height="20.3" viewBox="0 0 20.3 20.3"><g fill="none" stroke="#4a4a4a" stroke-width="1"><path d="M10 3.5L17.5 17H2.5z"/></g></svg>
<div class="cell" style="left:62.6px;top:209.5px"></div>
<svg class="a" style="left:62.6px;top:209.5px" width="20.3" height="20.3" viewBox="0 0 20.3 20.3"><g fill="none" stroke="#4a4a4a" stroke-width="1"><path d="M3 3.5L17.5 17H3z"/></g></svg>
<div class="cell" style="left:83.0px;top:209.5px"></div>
<svg class="a" style="left:83.0px;top:209.5px" width="20.3" height="20.3" viewBox="0 0 20.3 20.3"><g fill="none" stroke="#4a4a4a" stroke-width="1"><path d="M10.2 3L17.5 10.3 10.2 17.6 2.9 10.3z"/></g></svg>
<div class="cell" style="left:1.4px;top:230.0px"></div>
<svg class="a" style="left:1.4px;top:230.0px" width="20.3" height="20.3" viewBox="0 0 20.3 20.3"><g fill="none" stroke="#4a4a4a" stroke-width="1"><path d="M6 3.8h8.5l3.6 6.5-3.6 6.5H6l-3.6-6.5z"/></g></svg>
<div class="cell" style="left:21.8px;top:230.0px"></div>
<svg class="a" style="left:21.8px;top:230.0px" width="20.3" height="20.3" viewBox="0 0 20.3 20.3"><g fill="none" stroke="#4a4a4a" stroke-width="1"><path d="M10 3l6 3 1.5 6.5-4 5h-7l-4-5L4 6z"/></g></svg>
<div class="cell" style="left:42.2px;top:230.0px"></div>
<svg class="a" style="left:42.2px;top:230.0px" width="20.3" height="20.3" viewBox="0 0 20.3 20.3"><g fill="none" stroke="#4a4a4a" stroke-width="1"><path d="M7 3.5h6.5L17 7v6.5L13.5 17H7L3.5 13.5V7z"/></g></svg>
<div class="cell" style="left:62.6px;top:230.0px"></div>
<svg class="a" style="left:62.6px;top:230.0px" width="20.3" height="20.3" viewBox="0 0 20.3 20.3"><g fill="none" stroke="#4a4a4a" stroke-width="1"><circle cx="10.3" cy="10.3" r="7.3"/></g></svg>
<div class="cell" style="left:83.0px;top:230.0px"></div>
<svg class="a" style="left:83.0px;top:230.0px" width="20.3" height="20.3" viewBox="0 0 20.3 20.3"><g fill="none" stroke="#4a4a4a" stroke-width="1"><circle cx="10.3" cy="10.3" r="7.6"/></g></svg>
<div class="cell" style="left:1.4px;top:250.5px"></div>
<svg class="a" style="left:1.4px;top:250.5px" width="20.3" height="20.3" viewBox="0 0 20.3 20.3"><g fill="none" stroke="#4a4a4a" stroke-width="1"><path d="M5.5 4h9L17 17H3z"/></g></svg>
<div class="cell" style="left:21.8px;top:250.5px"></div>
<svg class="a" style="left:21.8px;top:250.5px" width="20.3" height="20.3" viewBox="0 0 20.3 20.3"><g fill="none" stroke="#4a4a4a" stroke-width="1"><path d="M10.2 3l6.3 6.5h-3.6v7.5H7.5V9.5H3.9z"/></g></svg>
<div class="cell" style="left:42.2px;top:250.5px"></div>
<svg class="a" style="left:42.2px;top:250.5px" width="20.3" height="20.3" viewBox="0 0 20.3 20.3"><g fill="none" stroke="#4a4a4a" stroke-width="1"><path d="M5.5 4h10v13h-10z M5.5 4c-1 0-1.5 .8-1 1.5M5.5 17c-1 0-1.5-.8-1-1.5"/></g></svg>
<div class="cell" style="left:62.6px;top:250.5px"></div>
<svg class="a" style="left:62.6px;top:250.5px" width="20.3" height="20.3" viewBox="0 0 20.3 20.3"><g fill="none" stroke="#4a4a4a" stroke-width="1"><circle cx="10.2" cy="10.3" r="7.5"/><circle cx="7.6" cy="8.3" r=".6"/><circle cx="12.8" cy="8.3" r=".6"/><path d="M6.3 11.5q3.9 3.5 7.8 0"/></g></svg>
<div class="cell" style="left:83.0px;top:250.5px"></div>
<svg class="a" style="left:83.0px;top:250.5px" width="20.3" height="20.3" viewBox="0 0 20.3 20.3"><g fill="none" stroke="#4a4a4a" stroke-width="1"><path d="M10.5 3.5c-1 1-.5 3-.5 4.5s-1 2 -1 2.5 1 1 1 2.5-.5 3.5.5 4.5"/></g></svg>
<div class="cell" style="left:1.4px;top:271.0px"></div>
<svg class="a" style="left:1.4px;top:271.0px" width="20.3" height="20.3" viewBox="0 0 20.3 20.3"><g fill="none" stroke="#4a4a4a" stroke-width="1"><path d="M3 4h14v9H8l-4 4 1-4H3z"/></g></svg>
<div class="cell" style="left:21.8px;top:271.0px"></div>
<svg class="a" style="left:21.8px;top:271.0px" width="20.3" height="20.3" viewBox="0 0 20.3 20.3"><g fill="none" stroke="#4a4a4a" stroke-width="1"><path d="M5 7c1-3 4-3 5-2 2-2 5-1 5 1 3 0 3 4 1 5 1 3-3 4-4 3-2 2-5 1-6-1-3 0-3-4-1-6z"/></g></svg>
<div class="cell" style="left:42.2px;top:271.0px"></div>
<svg class="a" style="left:42.2px;top:271.0px" width="20.3" height="20.3" viewBox="0 0 20.3 20.3"><g fill="none" stroke="#4a4a4a" stroke-width="1"><ellipse cx="10.2" cy="7" rx="7" ry="2.4"/><path d="M3.2 7v6.5c0 3 14 3 14 0V7"/></g></svg>
<div class="cell" style="left:62.6px;top:271.0px"></div>
<svg class="a" style="left:62.6px;top:271.0px" width="20.3" height="20.3" viewBox="0 0 20.3 20.3"><g fill="none" stroke="#4a4a4a" stroke-width="1"><path d="M4 17V9c0-8 11-8 11-1h2.5l-4 4-4-4H12c0-3-5-3-5 1v8z"/></g></svg>
<div class="cell" style="left:83.0px;top:271.0px"></div>
<svg class="a" style="left:83.0px;top:271.0px" width="20.3" height="20.3" viewBox="0 0 20.3 20.3"><g fill="none" stroke="#4a4a4a" stroke-width="1"><path d="M3 13l4-3.5v2h5V6h-2l4-3.5L18 6h-2v9H7v2z"/></g></svg>
<div class="cell" style="left:1.4px;top:291.5px"></div>
<svg class="a" style="left:1.4px;top:291.5px" width="20.3" height="20.3" viewBox="0 0 20.3 20.3"><g fill="none" stroke="#4a4a4a" stroke-width="1"><path d="M7.5 3h5v4.8h4.8v5H12.5v4.8h-5v-4.8H2.7v-5h4.8z"/></g></svg>
<div class="cell" style="left:21.8px;top:291.5px"></div>
<svg class="a" style="left:21.8px;top:291.5px" width="20.3" height="20.3" viewBox="0 0 20.3 20.3"><g fill="none" stroke="#4a4a4a" stroke-width="1"><path d="M7 3.5h6.5L17 7v6.5L13.5 17H7L3.5 13.5V7z"/></g></svg>
<div class="cell" style="left:42.2px;top:291.5px"></div>
<svg class="a" style="left:42.2px;top:291.5px" width="20.3" height="20.3" viewBox="0 0 20.3 20.3"><g fill="none" stroke="#4a4a4a" stroke-width="1"><path d="M3 3.5h14v11L14.5 17H3z M14.5 17v-2.5H17"/></g></svg>
<div class="a" style="left:104.4px;top:158px;width:81.5px;height:208px;background:#c4c4c4"></div>
<div class="mi" style="top:158.4px;font-weight:bold;font-size:8.8px;letter-spacing:-0.3px;line-height:13.6px">Basic</div>
<div class="mi" style="top:173.2px;">Objects</div>
<div class="mi" style="top:188.0px;">Symbols</div>
<div class="mi" style="top:202.8px;">Arrows</div>
<div class="mi" style="top:217.6px;">Flowchart</div>
<div class="mi" style="top:232.4px;">Animals</div>
<div class="mi" style="top:247.2px;">Cards &amp; Chess</div>
<div class="mi" style="top:262.0px;">Dialog balloons</div>
<div class="mi" style="top:276.8px;">Electronics</div>
<div class="mi" style="top:291.6px;">Mathematical</div>
<div class="mi" style="top:306.4px;">Music</div>
<div class="mi" style="top:321.2px;">Miscellaneous</div>
<div class="mi" style="top:336.0px;">raphaeljs.com set 1</div>
<div class="mi" style="top:350.8px;">raphaeljs.com set 2</div>
<div class="a" style="left:0;top:463px;width:690px;height:11px;background:#efefef"></div>
<div class="a" style="left:176px;top:464px;width:338px;height:8.5px;background:#c2c2c2"></div>
<div class="a" style="left:0;top:473.8px;width:690px;height:1.2px;background:#a8a8a8"></div>
<div class="a" style="left:0;top:475px;width:690px;height:27.5px;background:#d3d3d3;border-top:1px solid #e8e8e8"></div>
<div class="a" style="left:0;top:502.5px;width:690px;height:15px;background:#f0f0f0;border-top:1px solid #dcdcdc"></div>
<div class="a" style="left:673.3px;top:503px;width:1px;height:14px;background:#d0d0d0"></div>
<div class="a" style="left:0;top:517px;width:690px;height:1px;background:#5c9de0"></div>
<svg class="a" style="left:678px;top:504px" width="13" height="13" viewBox="0 0 13 13"><circle cx="6.5" cy="6.5" r="5.3" fill="#fff" stroke="#222" stroke-width="1.4"/><text x="6.6" y="8.8" font-size="5.6" font-weight="bold" font-family="Liberation Sans" text-anchor="middle" fill="#222">AO</text></svg>
<div class="inp" style="left:2.5px;top:479px;width:36.5px;height:15px"></div>
<div class="t" style="left:4.8px;top:481.4px;font-size:9.9px;color:#111;transform:scaleX(0.88);transform-origin:0 0">100</div>
<svg class="a" style="left:29px;top:481.5px" width="7" height="10" viewBox="0 0 7 10"><path d="M1 4L3.5 1 6 4M1 6l2.5 3L6 6" fill="none" stroke="#111" stroke-width="1.2"/></svg>
<div class="a" style="left:39.8px;top:480px;width:9.8px;height:13.5px;background:#e4e4e4;border:1px solid #c8c8c8;border-top-color:#f0f0f0;border-left-color:#f0f0f0"></div>
<svg class="a" style="left:42.3px;top:486px" width="5" height="3" viewBox="0 0 5 3"><path d="M0 0h5L2.5 3z" fill="#111"/></svg>
<div class="a" style="left:53px;top:477.5px;width:1px;height:18px;background:#a8a8a8;box-shadow:1px 0 0 #ececec"></div>
<div class="a" style="left:57px;top:477.5px;width:39px;height:18px;background:#e2e2e2;border-radius:2px"></div>
<svg class="a" style="left:58.5px;top:479px" width="14" height="15" viewBox="0 0 14 15"><path d="M4.5 4.2L9.8 9.5 6.6 12.7 1.3 7.4z" fill="#d8d8d8" stroke="#8a8a8a" stroke-width="1"/><path d="M4.5 4.2c.8-2 2.5-2.8 3.5-1.8s.3 2.8-1.2 3.8" fill="none" stroke="#8a8a8a" stroke-width="1"/><path d="M9.8 9.5c1.5.3 2.5 1.3 2.3 2.8" fill="none" stroke="#9a9a9a" stroke-width="1.2"/></svg>
<div class="a" style="left:75.3px;top:480px;width:12.5px;height:12.5px;background:#f00;border:1px solid #c8c8c8"></div>
<div class="a" style="left:98.5px;top:477.5px;width:87.5px;height:18px;background:#e2e2e2;border-radius:2px"></div><div class="a" style="left:187.4px;top:477.5px;width:73px;height:18px;background:#e2e2e2;border-radius:2px"></div>
<div class="a" style="left:101.2px;top:480.5px;width:11px;height:11.5px;border:3px solid #8a8a8a;background:#f4f4f4"></div>
<div class="a" style="left:116.5px;top:480px;width:12.5px;height:12.5px;background:#000;border:1px solid #c8c8c8"></div>
<div class="inp" style="left:133px;top:478.5px;width:38px;height:15.5px"></div>
<svg class="a" style="left:161px;top:481.5px" width="7" height="10" viewBox="0 0 7 10"><path d="M1 4L3.5 1 6 4M1 6l2.5 3L6 6" fill="none" stroke="#111" stroke-width="1.2"/></svg>
<div class="t" style="left:173.5px;top:481px;font-size:10px;color:#556;letter-spacing:-1.5px">&gt;&gt;</div>
<svg class="a" style="left:189.5px;top:479.5px" width="14" height="14" viewBox="0 0 14 14"><defs><linearGradient id="og" x1="0" y1="1" x2="1" y2="0"><stop offset="0" stop-color="#000"/><stop offset="1" stop-color="#777"/></linearGradient></defs><rect x="0.5" y="0.5" width="12.5" height="12.5" fill="url(#og)"/><rect x="4.5" y="0.5" width="8.5" height="8.5" fill="#bbb" opacity=".55"/><rect x="7.5" y="3.5" width="5.5" height="5.5" fill="#eee" opacity=".5"/></svg>
<div class="inp" style="left:205.8px;top:478.5px;width:37px;height:15.5px"></div>
<div class="t" style="left:208.5px;top:481.4px;font-size:9.9px;color:#111;transform:scaleX(0.88);transform-origin:0 0">100</div>
<svg class="a" style="left:233.5px;top:481.5px" width="7" height="10" viewBox="0 0 7 10"><path d="M1 4L3.5 1 6 4M1 6l2.5 3L6 6" fill="none" stroke="#111" stroke-width="1.2"/></svg>
<div class="a" style="left:247.6px;top:480px;width:10px;height:13.5px;background:#e4e4e4;border:1px solid #c8c8c8;border-top-color:#f0f0f0;border-left-color:#f0f0f0"></div>
<svg class="a" style="left:250.1px;top:486px" width="5" height="3" viewBox="0 0 5 3"><path d="M0 0h5L2.5 3z" fill="#111"/></svg>
<div class="a" style="left:286px;top:479px;width:410px;height:16.5px;background:#ececec;border-radius:2px"></div>
<svg class="a" style="left:288.5px;top:482px" width="11" height="10" viewBox="0 0 11 10"><rect width="11" height="10" fill="#fff"/><path d="M0 0l11 10M11 0L0 10" stroke="#e87878" stroke-width=".7"/></svg>
<div class="sw" style="left:299.40px;background:#000000"></div>
<div class="sw" style="left:309.76px;background:#3f3f3f"></div>
<div class="sw" style="left:320.12px;background:#7f7f7f"></div>
<div class="sw" style="left:330.48px;background:#bfbfbf"></div>
<div class="sw" style="left:340.84px;background:#ffffff"></div>
<div class="sw" style="left:351.20px;background:#ff0000"></div>
<div class="sw" style="left:361.56px;background:#ff7f00"></div>
<div class="sw" style="left:371.92px;background:#ffff00"></div>
<div class="sw" style="left:382.28px;background:#7fff00"></div>
<div class="sw" style="left:392.64px;background:#00ff00"></div>
<div class="sw" style="left:403.00px;background:#00ff7f"></div>
<div class="sw" style="left:413.36px;background:#00ffff"></div>
<div class="sw" style="left:423.72px;background:#007fff"></div>
<div class="sw" style="left:434.08px;background:#0000ff"></div>
<div class="sw" style="left:444.44px;background:#7f00ff"></div>
<div class="sw" style="left:454.80px;background:#ff00ff"></div>
<div class="sw" style="left:465.16px;background:#ff007f"></div>
<div class="sw" style="left:475.52px;background:#7f0000"></div>
<div class="sw" style="left:485.88px;background:#7f3f00"></div>
<div class="sw" style="left:496.24px;background:#7f7f00"></div>
<div class="sw" style="left:506.60px;background:#3f7f00"></div>
<div class="sw" style="left:516.96px;background:#007f00"></div>
<div class="sw" style="left:527.32px;background:#007f3f"></div>
<div class="sw" style="left:537.68px;background:#007f7f"></div>
<div class="sw" style="left:548.04px;background:#003f7f"></div>
<div class="sw" style="left:558.40px;background:#00007f"></div>
<div class="sw" style="left:568.76px;background:#3f007f"></div>
<div class="sw" style="left:579.12px;background:#7f007f"></div>
<div class="sw" style="left:589.48px;background:#7f003f"></div>
<div class="sw" style="left:599.84px;background:#ffaaaa"></div>
<div class="sw" style="left:610.20px;background:#ffd4aa"></div>
<div class="sw" style="left:620.56px;background:#ffffaa"></div>
<div class="sw" style="left:630.92px;background:#d4ffaa"></div>
<div class="sw" style="left:641.28px;background:#aaffaa"></div>
<div class="sw" style="left:651.64px;background:#aaffd4"></div>
<div class="sw" style="left:662.00px;background:#aaffff"></div>
<div class="sw" style="left:672.36px;background:#aad4ff"></div>
<div class="sw" style="left:682.72px;background:#aaaaff"></div>
</body></html>
